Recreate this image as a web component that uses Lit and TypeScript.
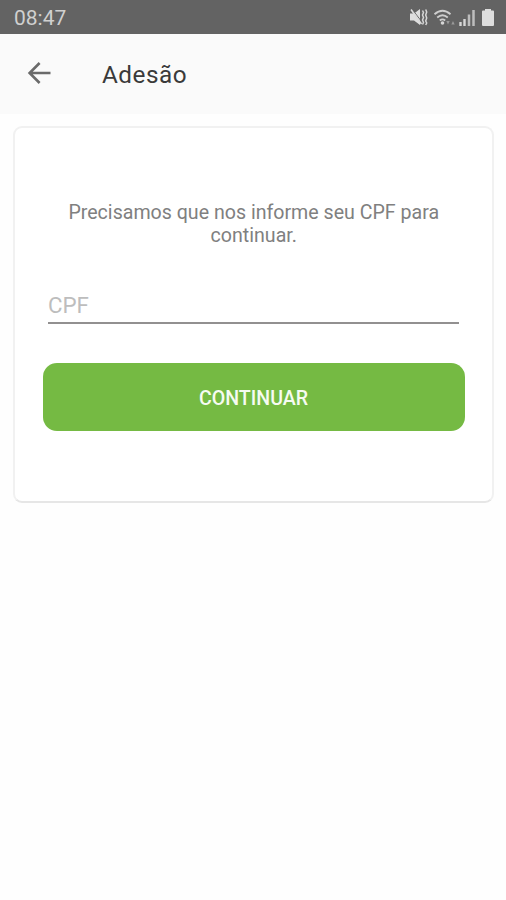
import { LitElement, html, css } from "lit";
import { customElement } from "lit/decorators.js";

@customElement("status-bar")
class StatusBar extends LitElement {
  static styles = css`
    :host {
      display: flex;
      box-sizing: border-box;
      height: 34px;
      padding: 1px 11px 0 14px;
      align-items: center;
      justify-content: space-between;
      background: #636363;
      color: #d0d0d0;
      font-size: 21px;
      line-height: 34px;
    }
    svg {
      display: block;
      width: 86px;
      height: 20px;
    }
  `;
  render() {
    return html`
      <span>08:47</span>
      <svg viewBox="409 8 86 20" fill="none">
        <g fill="#dedede">
          <path d="M410 13.500h4l6-4.500v16l-6-4.500h-4z" />
          <path d="M482 11.500q0-1 1-1h2V9h6v1.500h2q1 0 1 1V25q0 1-1 1h-10q-1 0-1-1z" />
        </g>
        <path d="M412 9l9.500 12.500" stroke="#636363" stroke-width="1" />
        <path d="M411 9.500l10.500 14.500" stroke="#dadada" stroke-width="1.600" />
        <path d="M422.500 10.500l1 2-1 2.500 1 2.500-1 2.500 1 2.500-1 2M425.700 9.500l1 2.500-1 3 1 3-1 3 1 2-1 2" stroke="#d6d6d6" stroke-width="1.500" />
        <path d="M434.500 14.200q8-7 16 0M437.200 17.500q5.300-4.600 10.600 0M439.800 20.500q2.700-2.300 5.400 0" stroke="#cecece" stroke-width="1.800" />
        <circle cx="442.500" cy="23" r="1.800" fill="#d6d6d6" />
        <path d="M446.300 21h3.400l-1.700 3.500zM451.300 24.500h3.400l-1.700-3.500z" fill="#999" />
        <path d="M460.500 22v4M464.500 19v7" stroke="#d6d6d6" stroke-width="2.400" />
        <path d="M469 14.500V26M473.500 10v16" stroke="#bdbdbd" stroke-width="2.500" />
      </svg>
    `;
  }
}

@customElement("app-toolbar")
class AppToolbar extends LitElement {
  static styles = css`
    :host {
      display: flex;
      box-sizing: border-box;
      height: 80px;
      padding: 0 0 0 27px;
      align-items: center;
      background: #fafafa;
      color: #3a3a3a;
    }
    button {
      display: block;
      border: 0;
      padding: 0;
      margin: 0 51px 2px 0;
      background: none;
    }
    svg {
      display: block;
      width: 24px;
      height: 24px;
    }
    h1 {
      margin: 0 0 -1px;
      font-size: 24.300px;
      font-weight: 400;
      line-height: 30px;
      letter-spacing: 0.500px;
    }
  `;
  render() {
    return html`
      <button aria-label="Voltar">
        <svg viewBox="0 0 24 24" fill="none" stroke="#6a6a6a" stroke-width="2.600">
          <path d="M12.600 2L2.600 12l10 10M2.800 12H23.500" />
        </svg>
      </button>
      <h1>Adesão</h1>
    `;
  }
}

@customElement("cpf-form")
class CpfForm extends LitElement {
  static styles = css`
    :host {
      display: block;
      box-sizing: border-box;
      height: 377px;
      margin: 12px 12px 0 13px;
      padding: 73px 28px 0 27.500px;
      border: 2px solid #f1f1f1;
      border-bottom-color: #e6e6e6;
      border-radius: 9px;
      background: #fff;
    }
    p {
      margin: 0 -1px 0 0;
      color: #808080;
      font-size: 19.600px;
      line-height: 23px;
      text-align: center;
    }
    input {
      display: block;
      box-sizing: border-box;
      width: 411px;
      height: 38px;
      margin: 39px 0 0 5.500px;
      padding: 1px 0 0;
      border: 0;
      border-bottom: 2px solid #929090;
      border-radius: 0;
      outline: 0;
      background: none;
      font: 22.300px Roboto, sans-serif;
    }
    input::placeholder {
      color: #bdbdbd;
      opacity: 1;
    }
    button {
      display: block;
      width: 422px;
      height: 68px;
      margin: 39px 0 0;
      padding: 3px 0 0;
      border: 0;
      border-radius: 14px;
      background: #75ba43;
      color: #f6fbf2;
      font: 500 19.600px Roboto, sans-serif;
    }
  `;
  render() {
    return html`
      <p>Precisamos que nos informe seu CPF para continuar.</p>
      <input placeholder="CPF" aria-label="CPF" inputmode="numeric" />
      <button>CONTINUAR</button>
    `;
  }
}

@customElement("app-root")
class AppRoot extends LitElement {
  static styles = css`
    :host {
      display: block;
      height: 900px;
      overflow: hidden;
      background: #fefefe;
      font-family: Roboto, sans-serif;
    }
  `;
  render() {
    return html`
      <status-bar></status-bar>
      <app-toolbar></app-toolbar>
      <cpf-form></cpf-form>
    `;
  }
}
